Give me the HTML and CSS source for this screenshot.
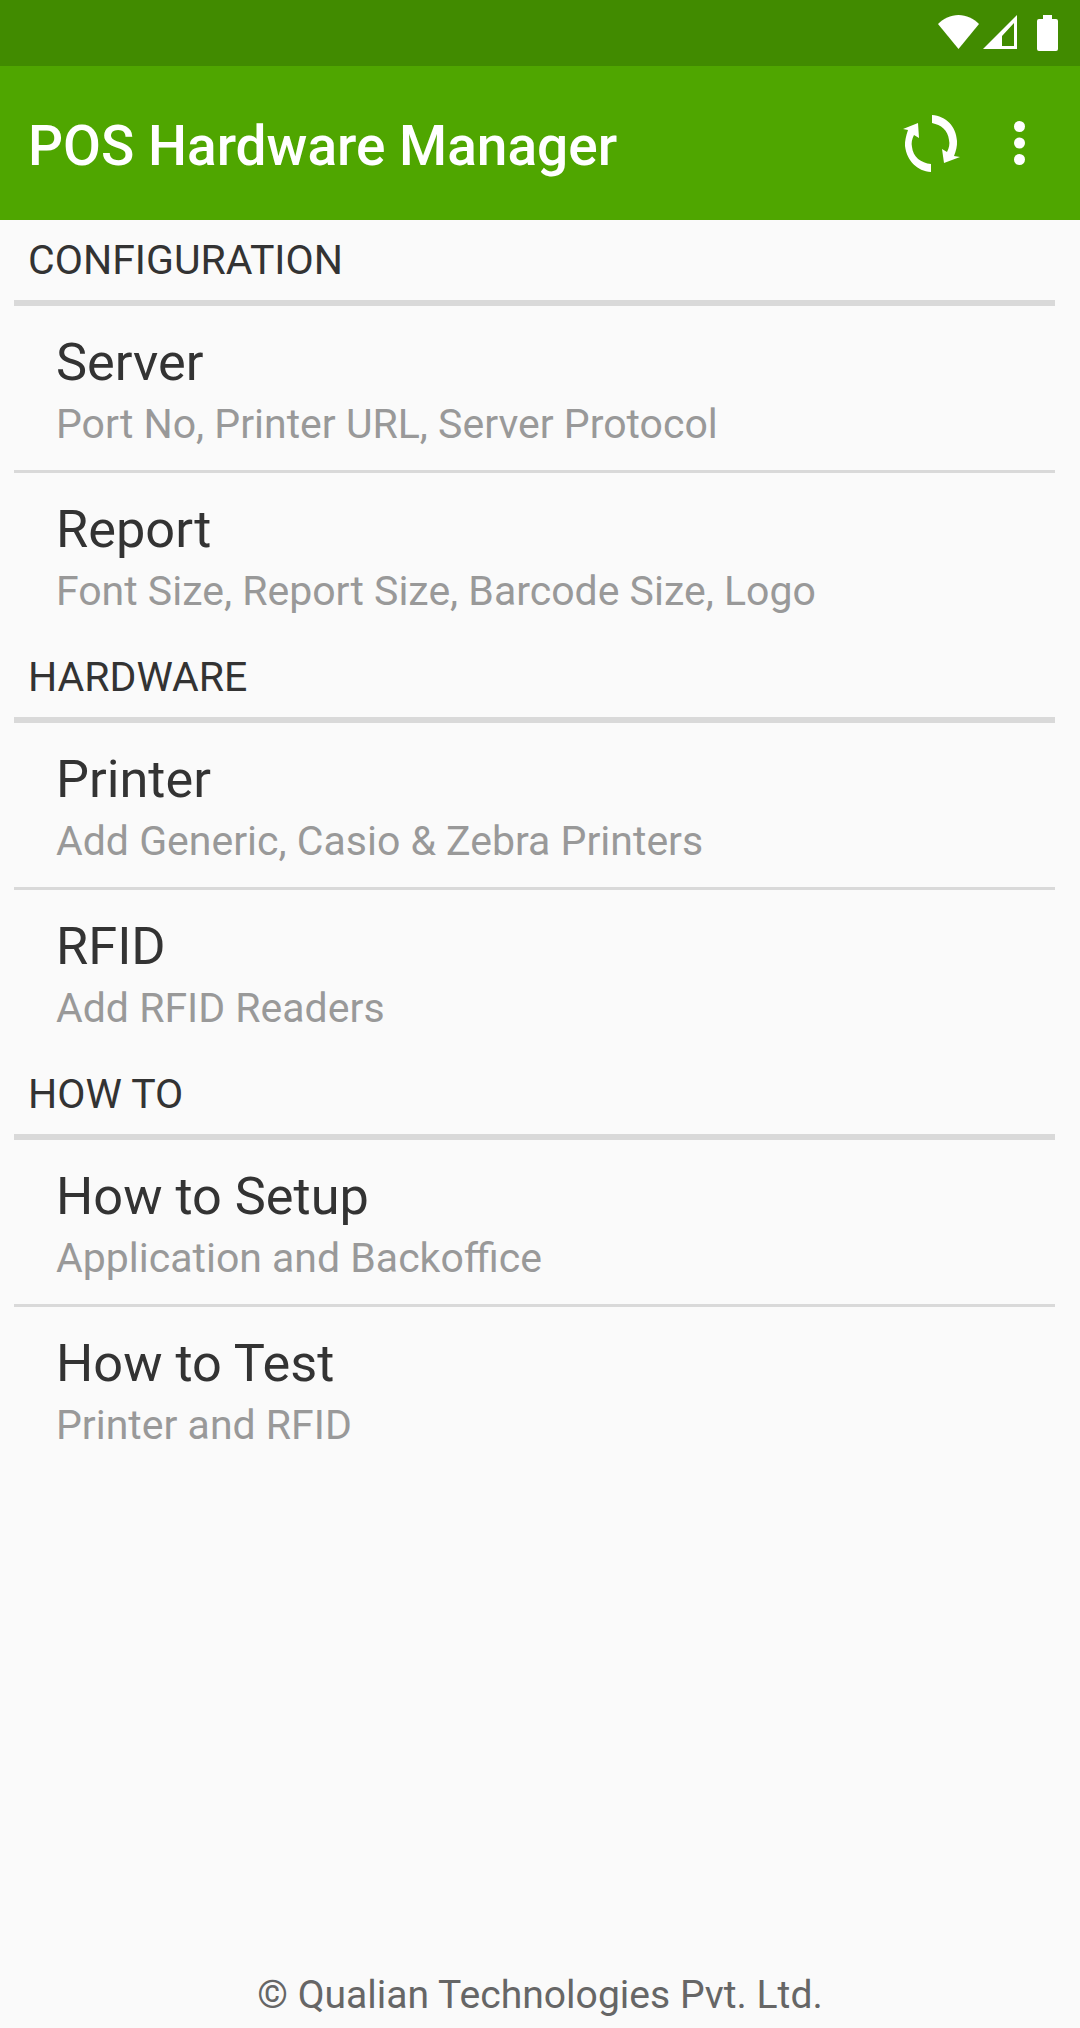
FILE: index.html
```html
<!DOCTYPE html>
<html lang="en">
<head>
    <meta charset="UTF-8" />
    <meta name="viewport" content="width=device-width, initial-scale=1.0" />
    <title>POS Hardware Manager</title>
    <link rel="stylesheet" href="styles.css">
</head>
<body>
    <div class="status-bar">
        <svg class="status-wifi" viewBox="0 0 41 34" width="41" height="34"><path d="M0 9C5.500 3.500 12.500 0 20.500 0S35.500 3.500 41 9L20.500 34z" fill="#fff"/></svg>
        <svg class="status-signal" viewBox="0 0 34 34" width="34" height="34"><path d="M34 0v34H0zM31 8L19 21v10h12z" fill="#fff" fill-rule="evenodd"/></svg>
        <svg class="status-battery" viewBox="0 0 21 36" width="21" height="36"><path d="M6 0h9v4h4q2 0 2 2v28q0 2-2 2H2q-2 0-2-2V6q0-2 2-2h4z" fill="#fff"/></svg>
    </div>
    <header class="app-bar">
        <h1>POS Hardware Manager</h1>
        <svg class="icon-sync" viewBox="0 0 57 57" width="57" height="57">
            <path d="M29 0C43 1 53 11 54 26C54.300 31 53 36 51 41L57 42L41 48L39 34L44 37C46 33 47 29 46 25C45 15 38 10 29 8z" fill="#fff"/>
            <path d="M28 57C14 56 4 46 2 31C1.700 26 3 21 5 15L0 14L15 8L16 23L11 20C9 24 8 28 9 32C10 42 18 48 28 49z" fill="#fff"/>
        </svg>
        <svg class="icon-more" viewBox="0 0 11 44" width="11" height="44">
            <circle cx="5.500" cy="5.500" r="5.500" fill="#fff"/>
            <circle cx="5.500" cy="22" r="5.500" fill="#fff"/>
            <circle cx="5.500" cy="38.500" r="5.500" fill="#fff"/>
        </svg>
    </header>
    <main class="settings">
        <section>
            <h2>CONFIGURATION</h2>
            <a class="item">
                <span class="item-title">Server</span>
                <span class="item-sub">Port No, Printer URL, Server Protocol</span>
            </a>
            <a class="item">
                <span class="item-title">Report</span>
                <span class="item-sub">Font Size, Report Size, Barcode Size, Logo</span>
            </a>
        </section>
        <section>
            <h2>HARDWARE</h2>
            <a class="item">
                <span class="item-title">Printer</span>
                <span class="item-sub">Add Generic, Casio &amp; Zebra Printers</span>
            </a>
            <a class="item">
                <span class="item-title">RFID</span>
                <span class="item-sub">Add RFID Readers</span>
            </a>
        </section>
        <section>
            <h2>HOW TO</h2>
            <a class="item">
                <span class="item-title">How to Setup</span>
                <span class="item-sub">Application and Backoffice</span>
            </a>
            <a class="item">
                <span class="item-title">How to Test</span>
                <span class="item-sub">Printer and RFID</span>
            </a>
        </section>
    </main>
    <footer class="copyright">© Qualian Technologies Pvt. Ltd.</footer>
</body>
</html>
```

FILE: styles.css
```css
body {
    font-family: Roboto, "Noto Sans", sans-serif;
    background-color: #fafafa;
    display: flex;
    flex-direction: column;
    height: 2028px;
    margin: 0;
    overflow: hidden;
}
.status-bar {
    background-color: #418b00;
    height: 66px;
    flex: none;
    display: flex;
    align-items: flex-start;
    justify-content: flex-end;
    padding: 15px 22px 0 0;
    box-sizing: border-box;
}
.status-signal {
    margin-left: 4px;
}
.status-battery {
    margin-left: 20px;
}
.app-bar {
    background-color: #4fa600;
    height: 154px;
    flex: none;
    display: flex;
    align-items: center;
    padding: 5px 55px 0 28px;
    box-sizing: border-box;
}
.app-bar h1 {
    flex: 1;
    margin: 0;
    color: #ffffff;
    font-size: 55px;
    font-weight: 500;
}
.icon-sync {
    margin: -5px 54px 0 0;
}
.icon-more {
    margin-top: -5px;
}
.settings {
    flex: 1;
}
h2 {
    margin: 0 25px 0 14px;
    height: 80px;
    line-height: 80px;
    padding-left: 14px;
    border-bottom: 6px solid #d9d9d9;
    color: #333333;
    font-size: 41px;
    font-weight: 400;
}
.item {
    display: block;
    margin: 0 25px 0 14px;
    padding: 0 0 0 42px;
    height: 164px;
    box-sizing: border-box;
}
.item + .item {
    border-top: 3px solid #d9d9d9;
    height: 167px;
}
.item-title {
    display: block;
    color: #333333;
    font-size: 52.300px;
    line-height: 58px;
    padding-top: 27px;
}
.item-sub {
    display: block;
    color: #999999;
    font-size: 41px;
    line-height: 48px;
    padding-top: 9px;
}
.copyright {
    flex: none;
    height: 56px;
    text-align: center;
    color: #666666;
    font-size: 39.100px;
    line-height: 46px;
}
```
